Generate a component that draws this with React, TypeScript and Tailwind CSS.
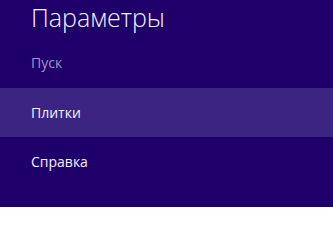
import React from 'react';

const App = () => {
  return (
    <div
      className="w-[333px] h-[207px] overflow-hidden bg-[#1f006a] text-white"
      style={{ fontFamily: '"Open Sans", "Noto Sans", sans-serif' }}
    >
      {/* Header */}
      <div className="pl-[31px] h-[50px]">
        <h1 className="text-[25px] font-light leading-[34px] text-[#f4f2fb]">Параметры</h1>
      </div>

      <div className="h-[38px] pl-[31px] flex items-start pt-[4px]">
        <span className="text-[14px] leading-[18px] text-[#a394cf]">Пуск</span>
      </div>

      {/* Items */}
      <div className="h-[49px] bg-[#3c2483] pl-[31px] flex items-center">
        <span className="text-[14px] leading-[20px] text-[#f4f2fb]">Плитки</span>
      </div>
      <div className="h-[49px] pl-[31px] flex items-center">
        <span className="text-[14px] leading-[20px] text-[#f4f2fb]">Справка</span>
      </div>
      <div className="h-[21px]" />
    </div>
  );
};

export default App;
